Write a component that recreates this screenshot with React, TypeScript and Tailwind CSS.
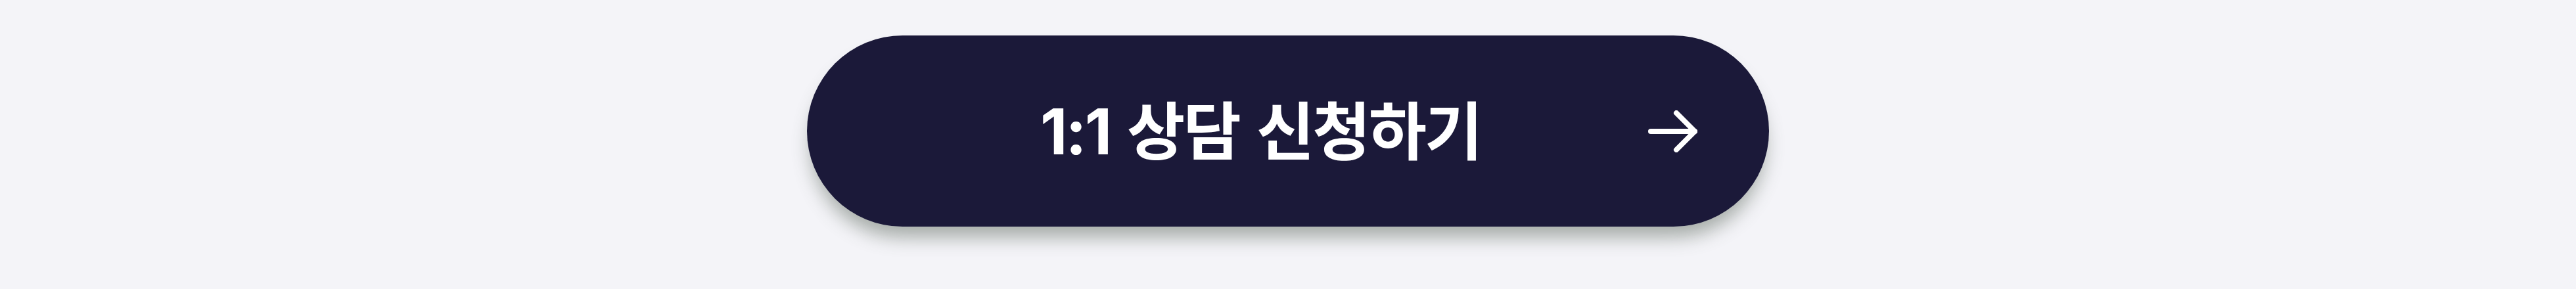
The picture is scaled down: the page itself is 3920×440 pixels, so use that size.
export default function App() {
  return (
    <div className="flex h-[440px] w-full justify-center bg-[#f4f4f8] pt-[54px]">
      <button
        type="button"
        className="flex h-[291px] w-[1464px] items-center rounded-full bg-[#1b1939] pl-[355px] pr-[109px] text-white shadow-[0_22px_28px_-6px_rgba(70,85,70,0.45)]"
      >
        <span className="whitespace-nowrap font-['Inter','Noto_Sans_CJK_KR',sans-serif] text-[96px] font-bold leading-none tracking-[-0.03em] [word-spacing:6px]">
          1:1 상담 신청하기
        </span>
        <svg
          className="ml-auto h-[64px] w-[75px]"
          viewBox="0 0 75 64"
          fill="none"
          stroke="currentColor"
          strokeWidth="8"
          strokeLinecap="round"
          strokeLinejoin="round"
        >
          <path d="M4 32H71" />
          <path d="M43 4L71 32L43 60" />
        </svg>
      </button>
    </div>
  )
}
